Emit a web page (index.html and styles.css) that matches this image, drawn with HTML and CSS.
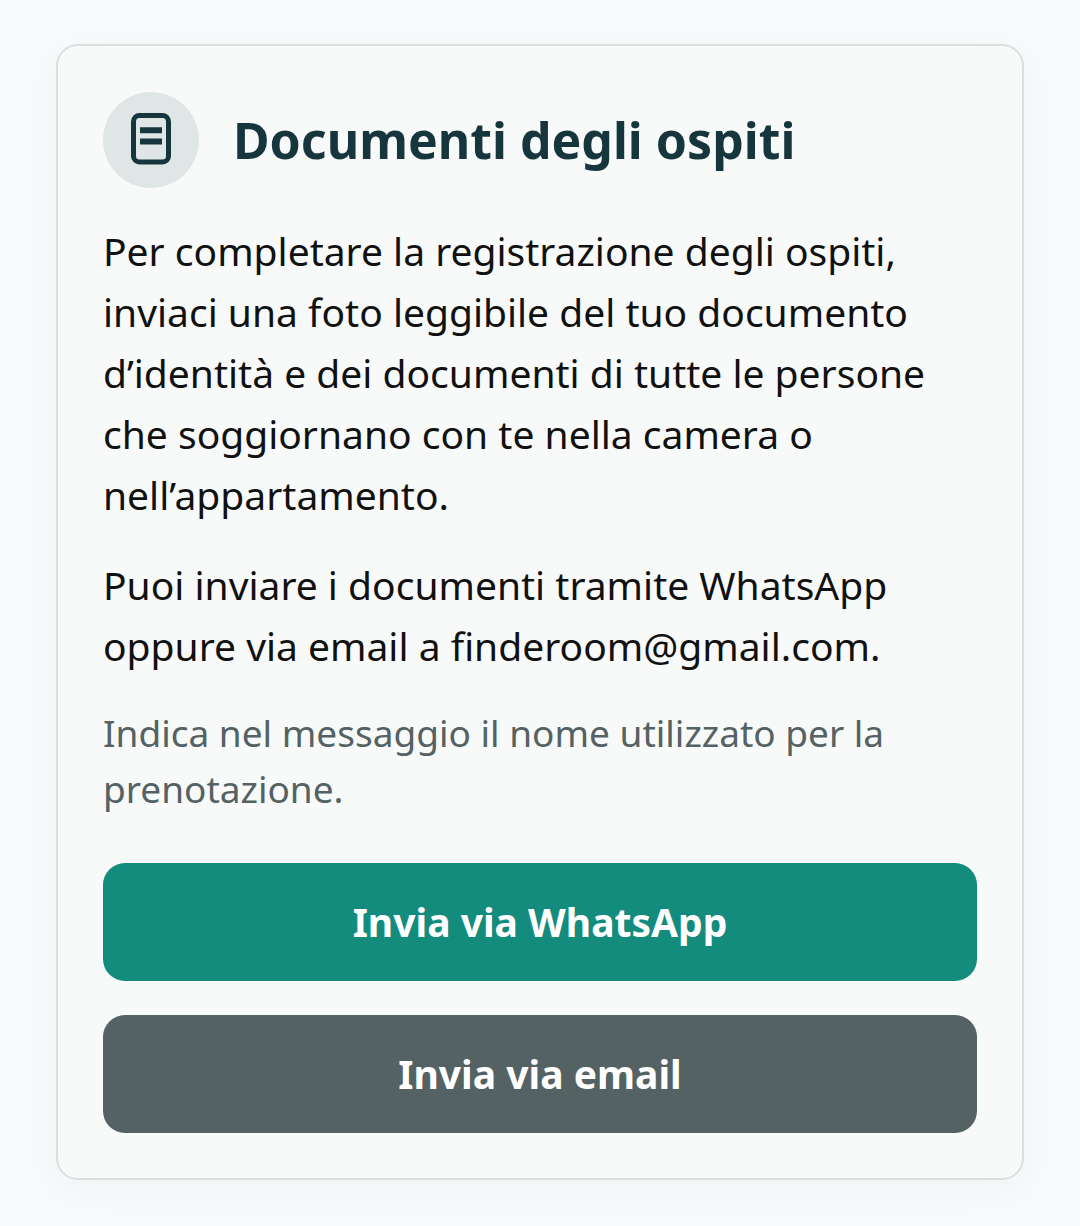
FILE: index.html
```html
<!DOCTYPE html>
<html lang="it">
<head>
    <meta charset="UTF-8">
    <meta name="viewport" content="width=device-width, initial-scale=1.0">
    <title>Documenti degli ospiti</title>
    <link rel="stylesheet" href="styles.css">
</head>
<body>
    <section class="card">
        <div class="card-header">
            <span class="card-icon">
                <svg viewBox="0 0 96 96" fill="none" stroke="#16353d" stroke-width="5" aria-hidden="true">
                    <rect x="30.500" y="23.500" width="35" height="46.500" rx="6"/>
                    <path d="M37 38.200H59M37 49.400H59" stroke-width="6"/>
                </svg>
            </span>
            <h1>Documenti degli ospiti</h1>
        </div>

        <p>Per completare la registrazione degli ospiti, inviaci una foto leggibile del tuo documento d’identità e dei documenti di tutte le persone che soggiornano con te nella camera o nell’appartamento.</p>
        <p>Puoi inviare i documenti tramite WhatsApp oppure via email a finderoom@gmail.com.</p>
        <p class="note">Indica nel messaggio il nome utilizzato per la prenotazione.</p>

        <div class="actions">
            <button type="button" class="btn btn-whatsapp">Invia via WhatsApp</button>
            <button type="button" class="btn btn-email">Invia via email</button>
        </div>
    </section>
</body>
</html>
```
FILE: styles.css
```css
* {
    box-sizing: border-box;
}
body {
    margin: 0;
    padding: 44px 56px;
    font-family: "Noto Sans", sans-serif;
    background-color: #f9fafc;
    color: #111;
}
.card {
    padding: 46px 45px 45px;
    background-color: #f8faf9;
    border: 2px solid #d9e0e0;
    border-radius: 22px;
    box-shadow: 0 10px 40px rgba(20, 50, 60, 0.04);
}
.card-header {
    display: flex;
    align-items: center;
    gap: 34px;
    margin-bottom: 32px;
}
.card-icon {
    flex: none;
    width: 96px;
    height: 96px;
    border-radius: 50%;
    background-color: #e0e6e6;
}
.card-icon svg {
    display: block;
}
h1 {
    margin: 0;
    font-size: 50px;
    line-height: 60px;
    color: #16353d;
}
p {
    margin: 0 0 29px;
    font-size: 39px;
    line-height: 61px;
}
.note {
    margin-bottom: 46px;
    font-size: 37px;
    line-height: 56px;
    color: #546264;
}
.actions {
    display: flex;
    flex-direction: column;
    gap: 34px;
}
.btn {
    padding: 29px;
    border: none;
    border-radius: 22px;
    font-family: inherit;
    font-size: 39px;
    font-weight: 700;
    line-height: 60px;
    color: #fff;
    cursor: pointer;
}
.btn-whatsapp {
    background-color: #138c7e;
}
.btn-email {
    background-color: #546264;
}
```
